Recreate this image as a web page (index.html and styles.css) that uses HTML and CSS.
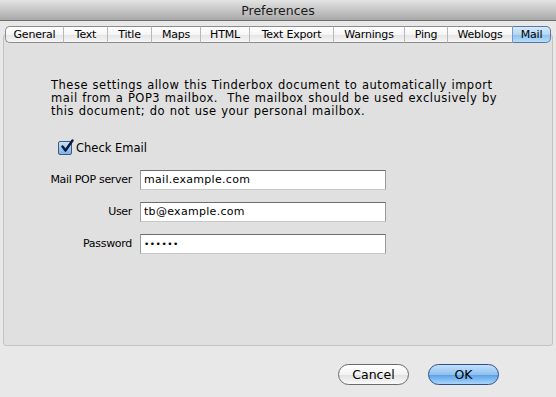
FILE: index.html
```html
<!DOCTYPE html>
<html>
<head>
<meta charset="utf-8">
<link rel="stylesheet" href="styles.css">
</head>
<body>
<div class="window">
  <div class="titlebar">Preferences</div>
  <div class="body">
    <div class="tabs">
      <div class="tab first">General</div>
      <div class="tab">Text</div>
      <div class="tab">Title</div>
      <div class="tab">Maps</div>
      <div class="tab">HTML</div>
      <div class="tab">Text Export</div>
      <div class="tab">Warnings</div>
      <div class="tab">Ping</div>
      <div class="tab">Weblogs</div>
      <div class="tab selected">Mail</div>
    </div>
    <div class="panel">
      <p class="intro">These settings allow this Tinderbox document to automatically import<br>mail from a POP3 mailbox.&nbsp; The mailbox should be used exclusively by<br>this document; do not use your personal mailbox.</p>
      <label class="check">
        <span class="box"><svg width="16" height="16" viewBox="0 0 16 16"><path d="M3.5 7.5 L6.5 11.5 L13.5 1.5" fill="none" stroke="#0a1a3a" stroke-width="2.4" stroke-linecap="round" stroke-linejoin="round"/></svg></span>
        <span>Check Email</span>
      </label>
      <div class="form">
        <div class="lbl">Mail POP server</div><div class="field">mail.example.com</div>
        <div class="lbl">User</div><div class="field">tb@example.com</div>
        <div class="lbl">Password</div><div class="field dots">&#8226;&#8226;&#8226;&#8226;&#8226;&#8226;</div>
      </div>
    </div>
    <div class="buttons">
      <div class="btn cancel">Cancel</div>
      <div class="btn ok">OK</div>
    </div>
  </div>
</div>
</body>
</html>
```
FILE: styles.css
```css
html, body {
  margin: 0;
  padding: 0;
  width: 556px;
  height: 397px;
  overflow: hidden;
  background: #e8e8e8;
  font-family: "DejaVu Sans", "Liberation Sans", sans-serif;
  color: #000;
}
.window {
  display: flex;
  flex-direction: column;
  height: 397px;
}
.titlebar {
  height: 21px;
  box-sizing: border-box;
  background: linear-gradient(#e3e3e3, #a9a9a9);
  border-bottom: 1px solid #6e6e6e;
  text-align: center;
  font-size: 12.5px;
  line-height: 21px;
  color: #1a1a1a;
}
.body {
  flex: 1;
  display: flex;
  flex-direction: column;
  padding: 5px 3px 0 3px;
}
.tabs {
  display: grid;
  grid-template-columns: 58px 44px 44px 49px 49px 84px 71px 43px 65px 39px;
  margin-left: 2px;
  height: 17px;
  position: relative;
  z-index: 2;
}
.tab {
  box-sizing: border-box;
  height: 17px;
  border-top: 1px solid #8c8c8c;
  border-bottom: 1px solid #8c8c8c;
  border-left: 1px solid #b8b8b8;
  background: linear-gradient(#ffffff 0%, #f5f5f5 50%, #e6e6e6 55%, #f6f6f6 100%);
  font-size: 11px;
  line-height: 15px;
  text-align: center;
  letter-spacing: -0.2px;
  white-space: nowrap;
}
.tab.first {
  border-left: 1px solid #8c8c8c;
  border-radius: 5px 0 0 5px;
}
.tab.selected {
  border-right: 1px solid #5a78a0;
  border-top-color: #5a78a0;
  border-bottom-color: #5a78a0;
  border-left-color: #7a98c0;
  border-radius: 0 5px 5px 0;
  background: linear-gradient(#d6e9fb 0%, #b4d6f6 50%, #8cc2f2 55%, #b8dcfb 100%);
}
.panel {
  margin-top: -9px;
  height: 312px;
  box-sizing: border-box;
  background: #e0e0e0;
  border: 1px solid #c2c2c2;
  border-radius: 3px;
  padding: 44px 0 0 47px;
}
.intro {
  margin: 0;
  width: 480px;
  font-size: 11.5px;
  line-height: 13px;
  letter-spacing: 0.5px;
  word-spacing: 0.5px;
  white-space: nowrap;
}
.check {
  display: flex;
  align-items: center;
  gap: 4px;
  margin: 23px 0 0 7px;
  font-size: 11.5px;
}
.box {
  width: 14px;
  height: 14px;
  box-sizing: border-box;
  border: 1px solid #3d5a85;
  border-radius: 2px;
  background: linear-gradient(#c6e0f8, #7fb3e6);
  position: relative;
}
.box svg {
  position: absolute;
  left: 0;
  top: -3px;
}
.form {
  display: grid;
  grid-template-columns: 99px 246px;
  column-gap: 8px;
  row-gap: 12px;
  margin: 15px 0 0 -18px;
}
.lbl {
  text-align: right;
  font-size: 11px;
  line-height: 20px;
  letter-spacing: -0.3px;
  white-space: nowrap;
}
.field {
  height: 20px;
  box-sizing: border-box;
  background: #fff;
  border: 1px solid #9a9a9a;
  border-top-color: #6e6e6e;
  border-bottom-color: #c8c8c8;
  font-size: 11px;
  line-height: 18px;
  padding-left: 3px;
  letter-spacing: 0.3px;
}
.field.dots {
  font-size: 9px;
  letter-spacing: 0.5px;
}
.buttons {
  display: flex;
  justify-content: flex-end;
  gap: 19px;
  padding: 18px 54px 0 0;
}
.btn {
  width: 71px;
  height: 21px;
  box-sizing: border-box;
  border-radius: 11px;
  font-size: 12.5px;
  line-height: 19px;
  text-align: center;
}
.cancel {
  border: 1px solid #6a6a6a;
  background: linear-gradient(#ffffff 0%, #f3f3f3 50%, #e2e2e2 55%, #fafafa 100%);
}
.ok {
  border: 1px solid #2f4f86;
  background: linear-gradient(#c5e0fa 0%, #8ec1f1 50%, #5ea3e8 55%, #a9d6fb 100%);
}
```
